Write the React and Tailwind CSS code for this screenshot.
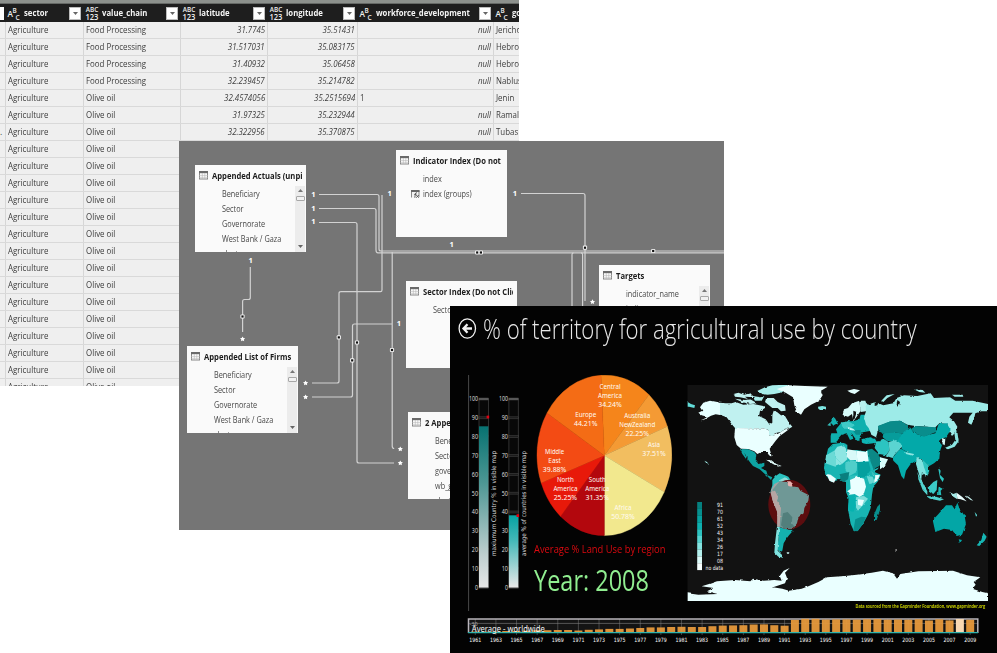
import React from "react";

const FONT = "font-['Open_Sans','Noto_Sans',sans-serif]";

/* ---------- Query editor table ---------- */

const COLS = [
  { w: "w-[78px]", type: "abc", name: "sector" },
  { w: "w-[97px]", type: "any", name: "value_chain" },
  { w: "w-[87px]", type: "any", name: "latitude" },
  { w: "w-[90px]", type: "any", name: "longitude" },
  { w: "w-[136px]", type: "abc", name: "workforce_development" },
  { w: "w-[60px]", type: "abc", name: "governorate" },
];

const HEAD_ROWS = [
  ["Food Processing", "31.7745", "35.51431", "null", "Jericho"],
  ["Food Processing", "31.517031", "35.083175", "null", "Hebron"],
  ["Food Processing", "31.40932", "35.06458", "null", "Hebron"],
  ["Food Processing", "32.239457", "35.214782", "null", "Nablus"],
  ["Olive oil", "32.4574056", "35.2515694", "1", "Jenin"],
  ["Olive oil", "31.97325", "35.232944", "null", "Ramallah"],
  ["Olive oil", "32.322956", "35.370875", "null", "Tubas"],
];
const ROWS = [
  ...HEAD_ROWS,
  ...Array.from({ length: 15 }, () => ["Olive oil", "", "", "", ""]),
];

function TypeIcon({ type }) {
  if (type === "abc") {
    return (
      <svg className="h-[16px] w-[14px] shrink-0" viewBox="0 0 14 16" fill="#f0f0f0" fontFamily="Open Sans, sans-serif" fontWeight="600">
        <text x="0.5" y="12.4" fontSize="9" textLength="5.4" lengthAdjust="spacingAndGlyphs">A</text>
        <text x="5.4" y="8" fontSize="7.8" textLength="4.2" lengthAdjust="spacingAndGlyphs">B</text>
        <text x="8.4" y="14.6" fontSize="7.8" textLength="4.2" lengthAdjust="spacingAndGlyphs">C</text>
      </svg>
    );
  }
  return (
    <svg className="h-[16px] w-[14px] shrink-0" viewBox="0 0 14 16" fill="#f0f0f0" fontFamily="Open Sans, sans-serif" fontWeight="600">
      <text x="0.7" y="7" fontSize="7.4" textLength="12.5" lengthAdjust="spacingAndGlyphs">ABC</text>
      <text x="0.4" y="14.6" fontSize="8.4" textLength="13" lengthAdjust="spacingAndGlyphs">123</text>
    </svg>
  );
}

function DropButton() {
  return (
    <span className="flex h-[13px] w-[12px] shrink-0 items-center justify-center border border-[#bdbdbd] bg-white">
      <svg className="h-[3px] w-[5px]" viewBox="0 0 5 3"><path d="M0 0H5L2.5 3Z" fill="#666" /></svg>
    </span>
  );
}

function QueryTable() {
  return (
    <div className="absolute left-0 top-0 h-[386px] w-[519px] overflow-hidden bg-[#efefef]">
      <div className="h-1 border-b border-[#666966] bg-[#8d918d]" />
      <div className="flex h-[18px] w-[560px] bg-[#1e1e1e]">
        <div className="flex w-[6px] shrink-0 items-center"><span className="h-[13px] w-[4px] bg-white" /></div>
        {COLS.map((c) => (
          <div key={c.name} className={`flex shrink-0 items-center overflow-hidden pl-px pr-[3px] ${c.w}`}>
            <TypeIcon type={c.type} />
            <span className="flex h-[18px] min-w-0 flex-1 items-center pl-[3px]">
              <span className="block origin-left scale-x-[0.91] whitespace-nowrap text-[8.5px] font-bold leading-[18px] text-[#f4f4f4]">{c.name}</span>
            </span>
            <DropButton />
          </div>
        ))}
      </div>
      {ROWS.map((r, i) => (
        <div key={i} className="flex h-[17px] w-[560px] border-b border-[#d9d9d9] text-[8.5px] leading-4 text-[#3c3c3c]">
          <div className="w-[6px] shrink-0 border-r border-[#d6d6d6]">{i === 6 ? "." : ""}</div>
          <div className="w-[78px] shrink-0 border-r border-[#d6d6d6] pl-[2px]">
            <span className="inline-block origin-left scale-x-[0.93]">Agriculture</span>
          </div>
          {r.map((v, j) => {
            const right = (j === 1 || j === 2 || v === "null");
            return (
              <div key={j} className={`shrink-0 border-r border-[#d6d6d6] pl-[2px] pr-[2px] ${right ? "text-right italic" : ""} ${COLS[j + 1].w}`}>
                <span className={`inline-block whitespace-nowrap ${right ? "origin-right scale-x-[0.93]" : "origin-left scale-x-[0.93]"}`}>{v}</span>
              </div>
            );
          })}
        </div>
      ))}
    </div>
  );
}

/* ---------- Relationship diagram ---------- */

function GridIcon() {
  return (
    <svg className="h-[9px] w-[9px] shrink-0" viewBox="0 0 9 9">
      <rect x="0.5" y="0.5" width="8" height="7.5" fill="#fff" stroke="#888" />
      <rect x="0" y="0" width="9" height="2.2" fill="#6a6a6a" />
      <path d="M3.3 2V8M5.8 2V8M0 4.4H9M0 6.3H9" stroke="#b5b5b5" strokeWidth="0.6" />
    </svg>
  );
}

function GroupIcon() {
  return (
    <svg className="h-[8px] w-[9px] shrink-0" viewBox="0 0 9 8">
      <path d="M0.5 7.5V0.5H8V7" fill="#f2f2f2" stroke="#888" />
      <rect x="0" y="0" width="8.5" height="2" fill="#666" />
      <path d="M6 2.8Q4.6 2.4 4.3 4L3.8 7.8M3.2 4.4H5.4M5.2 5L7.8 7.8M7.8 5L5.2 7.8" stroke="#444" strokeWidth="0.8" fill="none" />
    </svg>
  );
}

function ScrollTrack() {
  return (
    <div className="mr-px flex w-[10px] shrink-0 flex-col items-center bg-[#ececec] pb-1 pt-[3px]">
      <svg className="h-[3px] w-[5px]" viewBox="0 0 5 3"><path d="M0 3H5L2.5 0Z" fill="#777" /></svg>
      <div className="mt-1 h-[5px] w-[9px] shrink-0 rounded-[1px] border border-[#a8a8a8] bg-[#f2f2f2]" />
      <div className="flex-1" />
      <svg className="h-[3px] w-[5px]" viewBox="0 0 5 3"><path d="M0 0H5L2.5 3Z" fill="#666" /></svg>
    </div>
  );
}

function ModelCard({ pos, title, fields, scroll }) {
  return (
    <div className={`absolute flex h-[87px] w-[111px] flex-col overflow-hidden bg-[#fafafa] ${pos}`}>
      <div className="flex h-[21px] shrink-0 items-center gap-[4px] pl-[4px]">
        <GridIcon />
        <div className="w-[90px] overflow-hidden">
          <span className="block origin-left scale-x-[0.83] whitespace-nowrap text-[9.2px] font-bold leading-[14px] text-[#1c1c1c]">{title}</span>
        </div>
      </div>
      <div className="flex min-h-0 flex-1">
        <div className="min-w-0 flex-1 overflow-hidden">
          {fields.map((f) => (
            <div key={f} className="flex h-[15px] items-center whitespace-nowrap text-[8.5px] leading-[15px] text-[#484848]">
              <span className="flex w-[26.5px] shrink-0 justify-end pr-[3px]">{f === "index (groups)" ? <GroupIcon /> : null}</span>
              <span className="inline-block origin-left scale-x-[0.86]">{f}</span>
            </div>
          ))}
        </div>
        {scroll ? <ScrollTrack /> : null}
      </div>
    </div>
  );
}

const WIRES = [
  "M319 194.5H377Q379 194.5 379 196.5V249Q379 251 381 251H724",
  "M319 208.5H374Q376 208.5 376 210.5V250Q376 252.8 378 252.8H724",
  "M319 222.5H355Q357 222.5 357 224.5V461Q357 463 359 463H394",
  "M382 195V290Q382 291.7 380.5 291.7H341Q339 291.7 339 293.5V381Q339 383 337 383H312",
  "M392 324H354.5Q352.5 324 352.5 326V395Q352.5 397 350.5 397H312",
  "M392.2 252V446Q392.2 448.5 394.2 448.5",
  "M250.3 267V297.5Q250.3 299.5 248.5 299.5H244.5Q242.6 299.5 242.6 301.5V332",
  "M521 193.5H583Q585 193.5 585 195.5V301",
  "M572 310V254.5Q572 252.8 573.5 252.8M581 252.8Q582.6 252.8 582.6 254.5V310",
];
const DOTS = [[242.5, 316.5], [338.8, 337.4], [357, 342.5], [352.2, 360.4], [392, 350], [585, 247.7], [653.2, 251], [477.2, 252.5], [480.9, 252.5]];
const ONES = [[313.3, 194], [313.3, 208], [313.3, 221.5], [389.6, 193.5], [515, 193], [451.6, 244], [250.7, 260.5], [399, 323.5]];
const STARS = [[242.6, 339], [305.6, 383], [305.6, 397], [400.3, 449], [400.3, 463], [592.5, 301.8]];

function ModelView() {
  return (
    <div className="absolute left-[179px] top-[141px] h-[389px] w-[545px] overflow-hidden bg-[#757575]">
      <svg className="absolute inset-0 h-full w-full" viewBox="179 141 545 389">
        {WIRES.map((d) => <path key={d} d={d} fill="none" stroke="#d2d2d2" strokeWidth="1.2" />)}
        {DOTS.map(([x, y]) => (
          <g key={`${x}-${y}`}>
            <rect x={x - 2.1} y={y - 2.1} width="4.2" height="4.2" rx="1" fill="#f4f4f4" />
            <rect x={x - 1.1} y={y - 1.1} width="2.2" height="2.2" fill="#111" />
          </g>
        ))}
        {ONES.map(([x, y]) => (
          <text key={`${x}-${y}`} x={x} y={y + 2.8} fontSize="7.5" fontWeight="700" fontFamily="Noto Sans, sans-serif" textAnchor="middle" fill="#fff">1</text>
        ))}
        {STARS.map(([x, y]) => (
          <path key={`${x}-${y}`} transform={`translate(${x} ${y})`} d="M0-2.6L.9-.9 2.6-.7 1.3.5 1.6 2.3 0 1.5-1.6 2.3-1.3.5-2.6-.7-.9-.9Z" fill="#fff" />
        ))}
      </svg>
      <ModelCard pos="left-[16px] top-[24px]" scroll title="Appended Actuals (unpivoted)" fields={["Beneficiary", "Sector", "Governorate", "West Bank / Gaza", "cluster"]} />
      <ModelCard pos="left-[217px] top-[9px]" title="Indicator Index (Do not Click)" fields={["index", "index (groups)"]} />
      <ModelCard pos="left-[227px] top-[140px]" title="Sector Index (Do not Click)" fields={["Sector"]} />
      <ModelCard pos="left-[420px] top-[124px]" scroll title="Targets" fields={["indicator_name", "indicator"]} />
      <ModelCard pos="left-[8px] top-[205px]" scroll title="Appended List of Firms" fields={["Beneficiary", "Sector", "Governorate", "West Bank / Gaza", "cluster"]} />
      <ModelCard pos="left-[229px] top-[271px]" scroll title="2 Appended" fields={["Beneficiary", "Sector", "governorate", "wb_gaza", "cluster"]} />
    </div>
  );
}

/* ---------- Land use dashboard ---------- */

const TICKS = [100, 90, 80, 70, 60, 50, 40, 30, 20, 10, 0];
const tickY = (t) => 587.3 - t * 1.883;

function Gauge({ x, top, grad, label, dotY }) {
  return (
    <g>
      <rect x={x} y="399" width="9.4" height="188.5" fill="#080808" stroke="#3c3c3c" strokeWidth="0.8" />
      {TICKS.map((t) => (
        <g key={t}>
          <rect x={x} y={tickY(t) - 1} width="9.4" height="2" fill="#1c1c1c" stroke="#484848" strokeWidth="0.5" />
          <text x={x - 1} y={tickY(t) + 2.4} fontSize="6.6" textAnchor="end" fill="#d8d8d8" fontFamily="Noto Sans, sans-serif" textLength={t === 100 ? 9 : t === 0 ? 3 : 6.2} lengthAdjust="spacingAndGlyphs">{t}</text>
        </g>
      ))}
      <rect x={x} y={top} width="9.4" height={587.6 - top} fill={`url(#${grad})`} />
      <path d={`M${x} 399H${x + 9.4}`} stroke="#888" />
      <rect x={x + 7.6} y={dotY - 1.4} width="2.6" height="2.8" fill="#e00010" />
      <text transform={`translate(${x + 16.6} 556) rotate(-90)`} fontSize="6.4" fill="#d8d8d8" fontFamily="DejaVu Sans, sans-serif" textLength="105" lengthAdjust="spacingAndGlyphs">{label}</text>
    </g>
  );
}

function Gauges() {
  return (
    <svg className="h-[236px] w-[66px] shrink-0" viewBox="467 375 66 236">
      <defs>
        <linearGradient id="g1" x1="0" y1="0" x2="0" y2="1">
          <stop offset="0" stopColor="#077271" /><stop offset="0.35" stopColor="#4d9794" /><stop offset="0.8" stopColor="#bfcfcf" /><stop offset="1" stopColor="#e6e6e6" />
        </linearGradient>
        <linearGradient id="g2" x1="0" y1="0" x2="0" y2="1">
          <stop offset="0" stopColor="#06a3a3" /><stop offset="0.35" stopColor="#44b8b8" /><stop offset="1" stopColor="#e8e8e8" />
        </linearGradient>
      </defs>
      <path d="M468.6 375V611" stroke="#484848" />
      <Gauge x={479} top={426.3} grad="g1" dotY={417} label="maxiumum Country % in visible map" />
      <Gauge x={508.9} top={515.3} grad="g2" dotY={515.6} label="average % of countries in visible map" />
    </svg>
  );
}

const SLICES = [
  ["601 375.3", "649 394.8", "#f5851b"],
  ["649 394.8", "667.4 426.5", "#f49a34"],
  ["667.4 426.5", "664.2 492", "#f2be60"],
  ["664.2 492", "604.3 535.6", "#f2e88e"],
  ["604.3 535.6", "560.6 516.4", "#b3070d"],
  ["560.6 516.4", "541.2 483", "#e8190a"],
  ["541.2 483", "547 413", "#f34b14"],
  ["547 413", "601 375.3", "#f46c15"],
];
const SLICE_TEXT = [
  [610, [["Central", 388.8, 21], ["America", 397.8, 24], ["34.24%", 406.8, 23.5]]],
  [585.7, [["Europe", 416.8, 21], ["44.21%", 425.8, 23.5]]],
  [637.2, [["Australia", 417.2, 26], ["NewZealand", 426.4, 36], ["22.25%", 435.4, 23.5]]],
  [654, [["Asia", 446.9, 12], ["37.51%", 456, 23.5]]],
  [554.6, [["Middle", 453.5, 19], ["East", 462.5, 12.5], ["39.88%", 471.6, 23.5]]],
  [565.4, [["North", 481.6, 17], ["America", 490.6, 24], ["25.25%", 499.6, 23.5]]],
  [597.3, [["South", 481.6, 17], ["America", 490.6, 24], ["31.35%", 499.6, 23.5]]],
  [623, [["Africa", 509.4, 17], ["50.78%", 518.5, 23.5]]],
];

function Pie() {
  return (
    <svg className="h-[162px] w-[137px]" viewBox="536 375 137 162">
      {SLICES.map(([a, b, c]) => (
        <path key={c} d={`M604.3 455.4L${a}A67.7 80.4 0 0 1 ${b}Z`} fill={c} stroke={c} strokeWidth="0.4" />
      ))}
      {SLICE_TEXT.map(([x, lines]) => lines.map(([t, y, w]) => (
        <text key={t + y + x} x={x - w / 2} y={y + 0.3} fontSize="7.6" fill="#fffaf2" fontFamily="Noto Sans, sans-serif" textLength={w} lengthAdjust="spacingAndGlyphs">{t}</text>
      )))}
    </svg>
  );
}

/* Land shapes: polygons on a grid of thirds of a pixel */
const WEST = [
  ["#e6ffff", "55,68 75,62 105,68 105,105 92,103 78,107 62,116 46,125 66,110 50,106 40,98 52,92 45,82"],
  ["#62dcd8", "8,66 18,72 30,76 28,84 12,80 8,80"],
  ["#c0f1f0", "105,68 122,70 140,70 152,66 175,74 205,72 235,78 240,84 225,93 222,108 242,118 254,134 262,128 262,105 266,92 276,96 288,106 300,108 312,128 322,140 312,146 300,146 288,156 275,158 262,170 252,165 250,150 236,144 150,144 138,130 125,112 105,104"],
  ["#c0f1f0", "146,42 160,38 178,44 196,40 206,50 186,56 165,52 150,50"],
  ["#c0f1f0", "150,56 180,60 196,58 216,70 196,72 170,66"],
  ["#a8eeeb", "202,48 228,52 238,48 230,62 210,62"],
  ["#a8eeeb", "215,34 240,22 262,16 305,14 314,20 296,30 286,38 268,42 248,44 230,42"],
  ["#c0f1f0", "244,54 266,54 278,66 300,76 302,92 288,94 278,84 262,84 250,74 240,66"],
  ["#eaffff", "275,27 310,16 360,18 428,20 408,32 413,46 402,62 378,74 358,88 348,104 336,96 328,76 324,52 302,38"],
  ["#7fe6e2", "399,80 412,78 423,80 423,88 408,92 400,86"],
  ["#eaffff", "150,144 240,145 252,152 252,166 262,168 282,160 300,148 312,148 298,158 284,168 272,182 262,196 254,206 260,230 252,226 246,216 230,216 217,222 208,214 190,207 168,206 155,195 148,172"],
  ["#0ea4a3", "165,207 190,208 208,216 214,224 212,240 220,252 238,248 238,258 228,264 244,272 248,286 262,292 258,300 244,286 224,268 204,258 196,248 190,240 178,218 188,244 172,222"],
  ["#ddf8f7", "244,240 258,240 274,252 290,258 280,260 264,252"],
  ["#a0e8e4", "58,242 66,246 72,254 66,252"],
];
const SOUTH = [
  ["#2ac2bf", "262,300 272,288 284,280 300,286 310,290 318,302 300,310 280,308 264,332 256,336 262,316"],
  ["#8edcd8", "284,300 300,292 312,300 302,312 290,308"],
];
const SOUTH_IN = [
  ["#a3a3a3", "258,330 268,312 284,304 284,330 278,352 290,372 292,400 284,440 276,440 278,400 262,360"],
  ["#6f9896", "284,304 304,306 316,318 340,322 346,332 372,346 370,362 358,384 356,400 340,412 336,430 324,446 300,446 282,440 284,400 276,362 262,330"],
  ["#b7a5a3", "256,336 270,332 280,352 276,362 288,384 284,440 278,440 276,392 262,358"],
  ["#527f7c", "294,400 308,396 322,412 320,430 330,442 300,446 288,436"],
  ["#e7b0ae", "306,304 316,304 324,312 320,320 310,318"],
];
const SOUTH_END = [
  ["#14b1af", "282,440 302,448 326,450 312,466 304,476 296,490 292,512 284,518 276,508 280,480"],
  ["#7fe2df", "276,440 284,440 280,480 278,512 292,526 294,533 280,530 268,518 270,490"],
  ["#c8f5f4", "305,517 313,517 312,521 306,521"],
];
const EAST = [
  ["#15b3b1", "-28,128 -20,110 -14,116 -6,132 -18,138"],
  ["#33bcb9", "-38,136 -28,126 -28,138"],
  ["#d7fbfa", "8,105 12,88 24,84 36,70 58,62 62,92 50,110 40,124 36,102 24,110"],
  ["#b8f1ef", "58,62 76,62 82,80 78,94 62,96"],
  ["#0fb0ae", "-28,168 -26,160 -8,160 -12,148 4,128 22,124 40,124 58,118 62,104 76,104 84,126 92,140 92,154 72,156 60,168 58,184 46,176 34,158 40,176 30,180 20,160 4,164 -6,176 -12,188 -28,188"],
  ["#3fcac7", "2,128 26,124 44,136 30,146 10,146"],
  ["#088d8c", "38,150 62,150 60,164 48,164"],
  ["#c5f5f4", "22,140 40,146 46,152 30,150"],
  ["#9debe8", "76,66 84,74 106,66 130,76 160,70 170,54 192,46 232,48 272,40 282,54 330,52 346,62 398,62 444,72 444,94 424,94 406,100 402,118 394,134 384,128 388,110 398,98 372,98 340,98 328,112 342,124 352,140 348,156 336,168 326,152 322,132 298,130 284,144 262,140 226,138 202,134 180,122 150,126 116,138 114,152 108,172 94,164 86,144 78,134 72,112 78,94"],
  ["#9debe8", "124,62 140,46 164,42 142,54 130,66"],
  ["#e4fffe", "22,32 42,27 60,31 44,42 32,38"],
  ["#9debe8", "222,28 248,30 256,38 238,36"],
  ["#9debe8", "336,44 368,44 370,50 344,50"],
  ["#0a8b8a", "114,138 150,124 180,122 204,136 204,152 186,160 166,158 148,166 130,160 116,156"],
  ["#079c9b", "130,160 166,158 186,160 176,184 160,186 140,182 128,172"],
  ["#03a9a9", "186,160 210,142 222,160 250,168 286,160 296,132 320,130 332,150 318,172 302,178 296,184 306,196 300,214 298,236 282,250 268,258 244,238 224,232 206,218 186,208 172,184"],
  ["#098d8c", "212,148 226,138 262,140 288,142 288,156 252,170 224,160"],
  ["#0eb3b2", "64,178 88,172 106,178 112,188 82,192 66,188"],
  ["#2cc4c1", "108,186 130,176 146,186 148,212 138,226 118,222 104,204"],
  ["#5ad4d1", "146,186 168,180 184,192 180,208 164,224 158,234 138,228 148,212"],
  ["#05adac", "158,234 170,218 182,206 206,218 228,228 232,240 212,252 198,272 192,298 184,288 174,256 160,242"],
  ["#8be4e1", "196,216 222,222 220,228 198,222"],
  ["#0b8886", "80,210 96,206 118,224 128,240 118,258 100,268 88,246"],
  ["#d9fffd", "120,232 144,238 134,258 120,268"],
  ["#1fb8b6", "98,270 118,262 104,278"],
  ["#7fe3e0", "230,230 246,242 256,256 264,276 256,290 246,276 244,298 252,318 246,316 238,286 228,252"],
  ["#2ec3c0", "246,238 266,256 268,276 262,288 252,262"],
  ["#50d2cf", "232,276 244,302 262,334 262,346 248,330 236,300"],
  ["#50d2cf", "258,348 288,350 312,358 300,362 270,356"],
  ["#3bcac7", "266,320 280,306 292,300 290,330 280,342 268,334"],
  ["#22bdbb", "296,320 308,326 302,332 304,346 294,344"],
  ["#2cc4c1", "294,262 302,272 300,284 312,296 308,306 300,294"],
  ["#d6f8f7", "306,174 316,178 314,196 308,192"],
  ["#8ae5e2", "314,204 336,194 346,180 342,150 352,156 356,184 344,200 324,208"],
  ["#a5eae7", "328,336 340,342 350,338 352,358 340,350"],
  ["#eaffff", "350,338 366,350 380,364 362,358 352,356"],
  ["#c8f3f1", "374,346 386,350 400,362 392,360"],
  ["#03a6a6", "278,420 292,406 304,392 318,376 336,376 344,388 352,368 358,384 374,408 378,432 366,464 350,468 336,450 312,446 286,456"],
  ["#03a6a6", "356,478 366,480 360,490"],
  ["#16b5b3", "410,496 424,480 430,458 440,470 434,482 418,498"],
  ["#5bd5d2", "404,396 412,406 408,410"],
  ["#088f8e", "102,404 112,380 120,372 120,390 110,420 102,420"],
];
const AFRICA = [
  ["#18b5b3", "-36,206 -22,192 6,188 22,194 22,212 50,210 84,216 92,246 104,276 122,284 114,304 100,320 96,344 92,384 84,404 70,430 54,452 42,454 32,432 24,388 28,360 18,336 18,306 -6,300 -26,306 -44,284 -48,262 -42,232"],
  ["#8ee6e3", "-8,200 10,196 18,206 22,238 6,252 -12,234 -18,214"],
  ["#d8f9f8", "22,208 50,212 52,240 30,240 20,230"],
  ["#e8ffff", "50,212 82,216 86,244 52,246"],
  ["#6bdad6", "-42,226 -18,212 -12,234 6,252 -14,260 -44,250"],
  ["#8de5e2", "-12,234 6,252 -12,258"],
  ["#50ceca", "16,248 32,240 52,244 50,276 28,288 16,270"],
  ["#05a09f", "52,246 86,246 92,270 76,292 54,290"],
  ["#0a7f7e", "2,282 28,276 24,298 10,306 0,300"],
  ["#2dbfbc", "28,288 54,284 52,296 30,300"],
  ["#eaffff", "-40,282 -28,284 -12,296 -18,308 -32,302"],
  ["#eaffff", "92,272 104,286 120,284 112,302 100,310 106,290"],
  ["#67d7d4", "80,288 98,290 104,306 88,312"],
  ["#eaffff", "30,300 52,290 72,296 78,320 70,346 60,352 44,342 28,344 22,334 32,326"],
  ["#7fdedb", "48,352 72,348 84,356 70,374 54,392 44,376"],
  ["#eaffff", "54,358 72,360 66,378 54,374"],
  ["#07b2b0", "26,346 46,346 48,378 40,396 24,388"],
  ["#088f8e", "46,418 64,410 78,412 66,436 52,454 40,452"],
];
const ICE = "8,640 40,644 98,642 66,634 86,624 50,619 72,612 96,604 150,600 196,604 204,596 236,602 268,600 290,602 284,588 296,572 314,564 300,578 306,594 300,610 264,622 292,626 312,632 350,626 372,618 400,606 426,592 480,588 515,584 560,578 594,572 624,580 636,596 646,582 700,574 760,573 804,572 846,586 886,592 866,606 872,614 862,626 892,636 909,640 909,668 8,668";

const Shapes = ({ list }) => list.map(([c, p]) => <polygon key={p} points={p} fill={c} />);

const LEGEND = [["91", "#05807f"], ["70", "#068f8e"], ["61", "#06a09f"], ["52", "#0eb0af"], ["43", "#2dc2c0"], ["34", "#57d3d0"], ["26", "#85e3e0"], ["17", "#b4f0ee"], ["08", "#dcfbfa"], ["no data", "#f6ffff"]];

function WorldMap() {
  return (
    <svg className="h-[216px] w-[301px]" viewBox="687 385 301 216">
      <defs>
        <filter id="coast" x="-2%" y="-2%" width="104%" height="104%" colorInterpolationFilters="sRGB">
          <feTurbulence type="fractalNoise" baseFrequency="0.22" numOctaves="2" seed="4" result="n" />
          <feDisplacementMap in="SourceGraphic" in2="n" scale="2.4" xChannelSelector="R" yChannelSelector="G" />
        </filter>
      </defs>
      <rect x="687.5" y="385" width="301" height="216" fill="#121212" />
      <g filter="url(#coast)">
        <g transform="translate(685 380) scale(.33333)">
          <Shapes list={WEST} />
          <polygon fill="#121212" points="180,50 210,52 204,58 190,58" />
          <Shapes list={SOUTH} />
          <Shapes list={SOUTH_END} />
          <polygon points={ICE} fill="#eaffff" />
        </g>
        <g transform="translate(840 380) scale(.33333)">
          <Shapes list={EAST} />
          <Shapes list={AFRICA} />
          <g fill="#121212">
            <polygon points="62,158 90,154 92,166 80,172 66,170" />
            <polygon points="112,152 124,158 122,184 114,184 116,168" />
            <polygon points="40,92 50,96 44,116 36,122 40,106" />
            <polygon points="104,64 116,66 112,76 104,78" />
            <polygon points="172,60 180,66 176,80 170,74" />
          </g>
          <rect x="166" y="508" width="5" height="4" fill="#aaa" />
        </g>
      </g>
      <ellipse cx="789.3" cy="504.6" rx="21" ry="24.8" fill="#5c0d0f" />
      <g filter="url(#coast)">
        <g transform="translate(685 380) scale(.33333)"><Shapes list={SOUTH_IN} /></g>
      </g>
      {LEGEND.map(([t, c], i) => (
        <g key={t}>
          <rect x="697.2" y={502 + i * 6.8} width="4.8" height="6.9" fill={c} />
          <text x={t === "no data" ? 705.5 : 717} y={506.8 + i * 6.98} fontSize="5.8" fill="#f4f4f4" fontFamily="DejaVu Sans, sans-serif" textLength={t === "no data" ? 17.5 : 6} lengthAdjust="spacingAndGlyphs">{t}</text>
        </g>
      ))}
    </svg>
  );
}

const BARS = [0.6, 0.6, 0.6, 1.2, 1.2, 1.5, 2, 2, 2.2, 2.2, 1.7, 2.4, 2.8, 3.3, 3.3, 3.7, 4.2, 4.8, 4.8, 5.2, 5.4, 5.2, 5.2, 6, 6.6, 6.8, 7, 7.7, 7.8, 7, 6.5, 12.3, 13.4, 13.4, 12.6, 12.8, 12.8, 12.6, 13, 13.2, 12.6, 12.7, 12.5, 13, 11.7, 12.9, 11.8, 13.2, 12.4];

function Timeline() {
  return (
    <svg className="h-[28px] w-[529px]" viewBox="465 617 529 28">
      <rect x="468.5" y="619" width="509.3" height="13.5" fill="#141414" />
      {BARS.map((h, i) => (i % 2 === 0 ? <path key={i} d={`M${475.3 + i * 10.31} 619V635`} stroke="#8a8a8a" strokeOpacity="0.55" strokeWidth="0.8" /> : null))}
      <path d="M468.5 623.4H977.5" stroke="#8a8a8a" strokeOpacity="0.7" strokeWidth="0.8" />
      <path d="M468.5 633V619H977.8V633" fill="none" stroke="#b9b5bb" strokeWidth="1.5" />
      {BARS.map((h, i) => (
        <rect key={i} x={471.3 + i * 10.31} y={632.2 - h} width="8" height={h} fill={i === 47 ? "#f8d8b2" : "#e89a3c"} fillOpacity={i === 47 ? 1 : 0.94} />
      ))}
      <path d="M468 632.6H978" stroke="#2fb3ac" strokeWidth="1.2" />
      <text x="469.5" y="625.6" fontSize="5.5" fill="#aaa" fontFamily="Noto Sans, sans-serif">-30</text>
      <text x="471.8" y="632" fontSize="8.6" fill="#f4f4f4" fontFamily="Noto Sans, sans-serif" textLength="73" lengthAdjust="spacingAndGlyphs">Average - worldwide</text>
      {BARS.map((h, i) => (i % 2 === 0 ? (
        <text key={i} x={469.3 + i * 10.31} y="642.2" fontSize="5.9" fill="#fff" fontFamily="DejaVu Sans, sans-serif" textLength="12" lengthAdjust="spacingAndGlyphs">{1961 + i}</text>
      ) : null))}
    </svg>
  );
}

function Dashboard() {
  return (
    <div className="absolute left-[450px] top-[306px] flex h-[347px] w-[547px] flex-col overflow-hidden bg-[#030303]">
      <header className="flex h-[69px] items-start gap-[6px] pl-2 pt-[7px]">
        <svg className="mt-[4px] h-[22px] w-[19px] shrink-0" viewBox="0 0 19 22" fill="none" stroke="#f2f2f2">
          <ellipse cx="9.3" cy="11.5" rx="8.2" ry="9.7" strokeWidth="1.3" />
          <path d="M14 11.5H6M9.5 7.3L5.5 11.5L9.5 15.7" strokeWidth="2.3" />
        </svg>
        <h1 className="origin-left scale-x-[0.792] whitespace-nowrap text-[28px] font-light leading-[30px] text-[#e8e8e8]">% of territory for agricultural use by country</h1>
      </header>
      <main className="flex h-[236px] pl-[17px]">
        <Gauges />
        <section className="flex w-[154px] shrink-0 flex-col pl-[1px]">
          <div className="pl-[2px]"><Pie /></div>
          <p className="mt-[4px] h-[15px] origin-left scale-x-[0.85] whitespace-nowrap text-[11px] leading-[15px] text-[#dc0a10]">Average % Land Use by region</p>
          <p className="mt-[5px] origin-left scale-x-[0.81] whitespace-nowrap text-[29px] leading-[38px] text-[#90ee90]">Year: 2008</p>
        </section>
        <section className="flex flex-col items-end pt-[10px]">
          <WorldMap />
          <p className="mt-px origin-right scale-x-[0.72] whitespace-nowrap pr-1 text-[5.5px] font-semibold leading-[8px] text-[#e0e800]">Data sourced from the Gapminder Foundation, www.gapminder.org</p>
        </section>
      </main>
      <footer className="flex pl-[15px] pt-[6px]">
        <Timeline />
      </footer>
    </div>
  );
}

export default function App() {
  return (
    <div className={`relative h-[653px] w-[997px] overflow-hidden bg-white ${FONT}`}>
      <QueryTable />
      <ModelView />
      <Dashboard />
    </div>
  );
}
